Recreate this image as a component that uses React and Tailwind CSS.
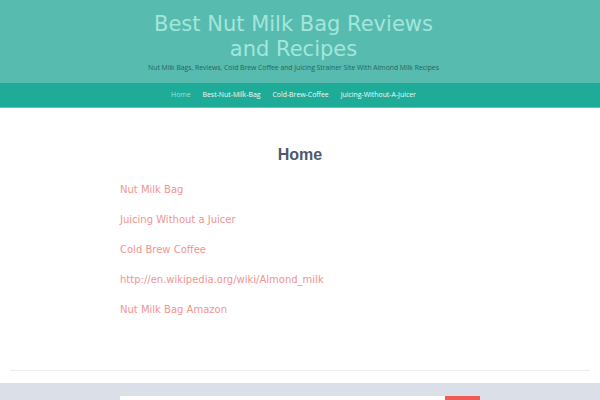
import React from "react";

const navItems = [
  { label: "Home", active: true },
  { label: "Best-Nut-Milk-Bag" },
  { label: "Cold-Brew-Coffee" },
  { label: "Juicing-Without-A-Juicer" },
];

const links = [
  "Nut Milk Bag",
  "Juicing Without a Juicer",
  "Cold Brew Coffee",
  "http://en.wikipedia.org/wiki/Almond_milk",
  "Nut Milk Bag Amazon",
];

export default function App() {
  return (
    <div className="w-[600px] h-[400px] overflow-hidden bg-white">
      <header className="h-[83px] bg-[#58bbaf] flex flex-col items-center pt-[12px] pr-[13px]">
        <h1 className="w-[320px] text-center text-[21px] leading-[25px] text-[#a3e6dc] font-['DejaVu_Sans',sans-serif]">
          Best Nut Milk Bag Reviews and Recipes
        </h1>
        <p className="mt-[1px] text-[6.8px] leading-[10px] text-[#24665d] font-['Open_Sans',sans-serif]">
          Nut Milk Bags, Reviews, Cold Brew Coffee and Juicing Strainer Site With Almond Milk Recipes
        </p>
      </header>

      <nav className="h-[25px] bg-[#1eab98] border-b border-[#5fc5b8] flex justify-center items-center gap-[12px] pr-[13px] text-[6.9px] font-['Open_Sans',sans-serif]">
        {navItems.map((item) => (
          <a
            key={item.label}
            href="#"
            className={item.active ? "text-[#9fe3d8]" : "text-[#eefaf8]"}
          >
            {item.label}
          </a>
        ))}
      </nav>

      <main className="w-[360px] mx-auto pt-[37px]">
        <h2 className="text-center text-[16px] leading-[20px] font-bold text-[#4b596e] font-['Liberation_Sans',sans-serif]">
          Home
        </h2>
        <div className="mt-[10px] font-['DejaVu_Sans',sans-serif] text-[10px] leading-[30px] text-[#f29490]">
          {links.map((l) => (
            <a key={l} href="#" className="block">
              {l}
            </a>
          ))}
        </div>
      </main>

      <div className="mx-[10px] mt-[45px] border-t border-[#eceef0]" />

      <footer className="mt-[12px] h-[40px] bg-[#dbe0e8] pt-[13px]">
        <div className="w-[360px] mx-auto flex">
          <input className="flex-1 h-[30px] bg-white outline-none" />
          <button className="w-[35px] h-[30px] bg-[#ef5b55]" />
        </div>
      </footer>
    </div>
  );
}
